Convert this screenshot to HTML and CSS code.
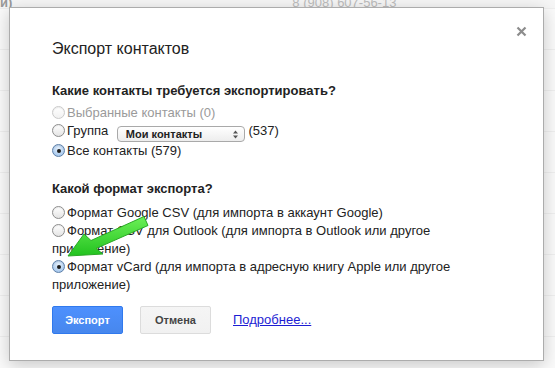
FILE: index.html
```html
<!DOCTYPE html>
<html lang="ru">
<head>
  <meta charset="UTF-8">
  <meta name="viewport" content="width=device-width, initial-scale=1.0">
  <title>Экспорт контактов</title>
  <link rel="stylesheet" href="styles.css">
</head>
<body>
  <div class="page">
    <div class="page-row first">
      <span class="cell-name">и)</span>
      <span class="cell-phone">8 (908) 607-56-13</span>
    </div>
    <div class="page-row"></div>
    <div class="page-row"></div>
    <div class="page-row"></div>
    <div class="page-row"></div>
    <div class="page-row"></div>
    <div class="page-row"></div>
    <div class="page-row"></div>
    <div class="page-row"></div>
  </div>

  <div class="dialog">
    <button class="close" type="button" aria-label="Закрыть">
      <svg width="11" height="11" viewBox="0 0 11 11">
        <path d="M1.5 1.5 L9.5 9.5 M9.5 1.5 L1.5 9.5" stroke="#8c8c8c" stroke-width="2.2" fill="none"/>
      </svg>
    </button>

    <h2 class="title">Экспорт контактов</h2>

    <div class="section first">
      <div class="question">Какие контакты требуется экспортировать?</div>
      <label class="option disabled"><span class="radio"></span>Выбранные контакты (0)</label>
      <label class="option"><span class="radio"></span>Группа <span class="select">Мои контакты
        <svg class="updown" width="7" height="9" viewBox="0 0 7 9"><path d="M3.5 0.5 L6 3.5 L1 3.5 Z M3.5 8.5 L6 5.5 L1 5.5 Z" fill="#555"/></svg></span> (537)</label>
      <label class="option"><span class="radio checked"></span>Все контакты (579)</label>
    </div>

    <div class="section">
      <div class="question">Какой формат экспорта?</div>
      <label class="option"><span class="radio"></span>Формат Google CSV (для импорта в аккаунт Google)</label>
      <label class="option"><span class="radio"></span>Формат CSV для Outlook (для импорта в Outlook или другое приложение)</label>
      <label class="option"><span class="radio checked"></span>Формат vCard (для импорта в адресную книгу Apple или другое приложение)</label>
    </div>

    <div class="actions">
      <button class="btn primary" type="button">Экспорт</button>
      <button class="btn" type="button">Отмена</button>
      <a class="more" href="#">Подробнее...</a>
    </div>

    <svg class="pointer" width="95" height="55" viewBox="0 0 95 55">
      <defs>
        <linearGradient id="green" x1="0" y1="0" x2="0" y2="1">
          <stop offset="0" stop-color="#6cf057"/>
          <stop offset="1" stop-color="#22c21f"/>
        </linearGradient>
      </defs>
      <polygon points="8,46 24,24 31,30.5 84,6.5 88,15.5 36,38.5 43,44" fill="url(#green)" stroke="#2aa825" stroke-width="1" stroke-linejoin="round"/>
    </svg>
  </div>
</body>
</html>
```

FILE: styles.css
```css
body {
  margin: 0;
  padding: 0;
  font-family: "Liberation Sans", Arial, sans-serif;
  background-color: #fafafa;
  color: #222;
}
.page {
  height: 368px;
  overflow: hidden;
}
.page-row {
  height: 40px;
  border-bottom: 1px solid #efefef;
}
.page-row.first {
  height: 8px;
  display: flex;
  overflow: hidden;
  font-size: 13px;
  line-height: 13px;
  background-color: #f6f6f6;
}
.cell-name {
  margin-top: -4px;
  color: #9a9a9a;
  font-weight: bold;
}
.cell-phone {
  margin-top: -4px;
  margin-left: 280px;
  color: #bdbdbd;
}
.dialog {
  position: absolute;
  left: 9px;
  top: 7px;
  width: 535px;
  height: 354px;
  box-sizing: border-box;
  padding: 31px 42px 0 42px;
  background-color: #fff;
  border: 1px solid #acacac;
  box-shadow: 0 4px 16px rgba(0, 0, 0, 0.2);
  font-size: 13px;
  line-height: 18px;
}
.close {
  position: absolute;
  right: 16px;
  top: 18px;
  width: 11px;
  height: 11px;
  padding: 0;
  border: none;
  background: none;
  cursor: pointer;
}
.close svg {
  display: block;
}
.title {
  margin: 0;
  font-size: 16px;
  line-height: 20px;
  font-weight: normal;
  color: #222;
}
.section {
  margin-top: 20px;
}
.section.first {
  margin-top: 23px;
}
.question {
  font-weight: bold;
  color: #222;
  margin-bottom: 6px;
}
.section.first .question {
  margin-bottom: 4px;
}
.option {
  display: block;
}
.option.disabled {
  color: #9a9a9a;
}
.radio {
  display: inline-block;
  width: 13px;
  height: 13px;
  box-sizing: border-box;
  margin-right: 2px;
  vertical-align: -2px;
  border: 1px solid #8d8d8d;
  border-radius: 50%;
  background: linear-gradient(#ffffff, #e4e4e4);
  box-shadow: inset 0 1px 1px rgba(0, 0, 0, 0.08);
  position: relative;
}
.option.disabled .radio {
  border-color: #cacaca;
  background: linear-gradient(#ffffff, #f1f1f1);
}
.radio.checked {
  border-color: #5d7fa8;
  background: radial-gradient(circle at 50% 35%, #e6f1fc, #93bbe8);
}
.radio.checked::after {
  content: "";
  position: absolute;
  left: 3.5px;
  top: 3.5px;
  width: 4px;
  height: 4px;
  border-radius: 50%;
  background-color: #1c1c1c;
}
.select {
  display: inline-flex;
  align-items: center;
  justify-content: space-between;
  box-sizing: border-box;
  width: 128px;
  height: 16px;
  margin-left: 5px;
  padding: 0 5px 0 8px;
  vertical-align: -3px;
  border: 1px solid #a9a9a9;
  border-radius: 4px;
  background: linear-gradient(#ffffff, #ededed);
  font-size: 11px;
  line-height: 14px;
  font-weight: bold;
  color: #222;
}
.updown {
  display: block;
}
.actions {
  margin-top: 12px;
  display: flex;
  align-items: center;
}
.btn {
  box-sizing: border-box;
  width: 71px;
  height: 28px;
  margin-right: 17px;
  padding: 0;
  border: 1px solid #dcdcdc;
  border-radius: 2px;
  background: linear-gradient(#f5f5f5, #f1f1f1);
  color: #444;
  font-family: "Liberation Sans", Arial, sans-serif;
  font-size: 11px;
  font-weight: bold;
  cursor: pointer;
}
.btn.primary {
  border-color: #3079ed;
  background: linear-gradient(#4d90fe, #4787ed);
  color: #fff;
}
.more {
  margin-left: 5px;
  color: #1d1dd3;
  text-decoration: underline;
  font-size: 13px;
}
.pointer {
  position: absolute;
  left: 50px;
  top: 202px;
}
```
